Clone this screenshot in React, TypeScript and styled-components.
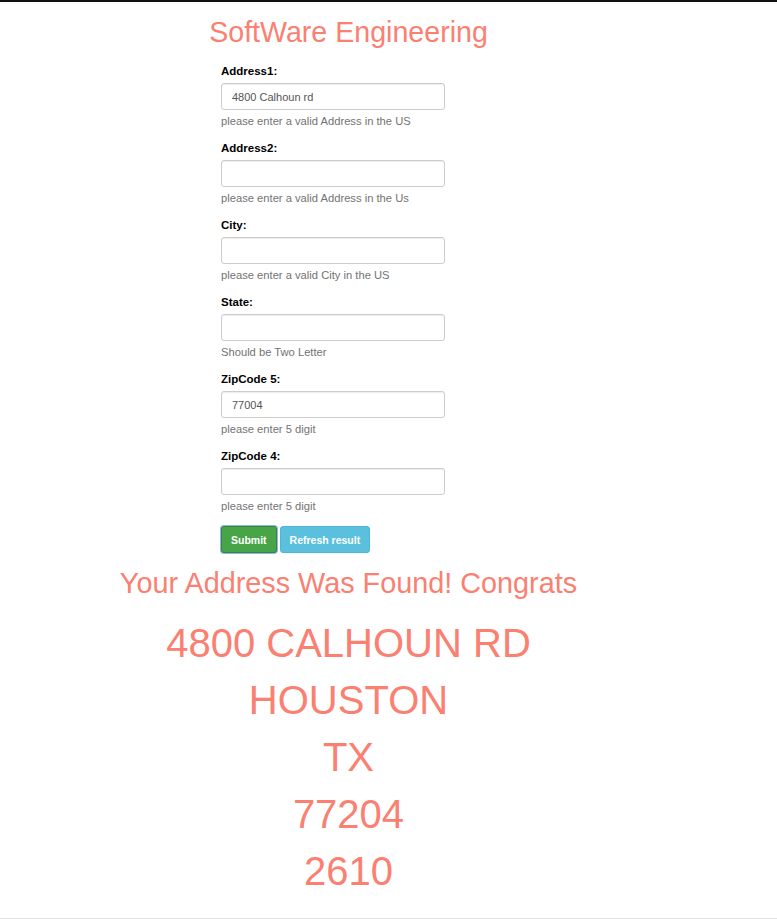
import React from 'react';
import styled, { createGlobalStyle } from 'styled-components';

const GlobalStyle = createGlobalStyle`
  html, body {
    margin: 0;
    padding: 0;
    background: #fff;
  }
  body {
    font-family: "Liberation Sans", Arial, sans-serif;
    color: #333;
  }
  * {
    box-sizing: border-box;
  }
`;

const salmon = '#fa8072';

const Page = styled.div`
  border-top: 2px solid #111;
  min-height: 921px;
  display: flex;
  flex-direction: column;
`;

const Column = styled.main`
  width: 697px;
  display: flex;
  flex-direction: column;
`;

const Title = styled.h1`
  margin: 0;
  padding-top: 13px;
  font-size: 28.6px;
  line-height: 34px;
  font-weight: normal;
  color: ${salmon};
  text-align: center;
`;

const Form = styled.form`
  margin: 14px 0 0 221px;
  width: 224px;
  display: flex;
  flex-direction: column;
`;

const Group = styled.div`
  display: flex;
  flex-direction: column;
  margin-bottom: 11px;
`;

const Label = styled.label`
  font-size: 11.5px;
  font-weight: bold;
  line-height: 16px;
  color: #000;
  margin-bottom: 4px;
`;

const Input = styled.input`
  width: 224px;
  height: 27px;
  padding: 0 10px;
  border: 1px solid #ccc;
  border-radius: 3px;
  font-family: inherit;
  font-size: 11px;
  color: #555;
  outline: none;
  box-shadow: inset 0 1px 1px rgba(0, 0, 0, 0.075);
`;

const Help = styled.span`
  margin-top: 3px;
  font-size: 11.2px;
  line-height: 16px;
  color: #737373;
`;

const Buttons = styled.div`
  display: flex;
  gap: 3px;
  margin-top: 1px;
`;

const Button = styled.button<{ $variant: 'success' | 'info' }>`
  height: 27px;
  padding: 0 9px;
  border-radius: 3px;
  font-family: inherit;
  font-size: 10.5px;
  font-weight: bold;
  color: #fff;
  cursor: pointer;
  background: ${(p) => (p.$variant === 'success' ? '#47a447' : '#5bc0de')};
  border: 1px solid ${(p) => (p.$variant === 'success' ? '#398439' : '#46b8da')};
  box-shadow: ${(p) => (p.$variant === 'success' ? '0 0 0 1px #8fb4f0' : 'none')};
`;

const Found = styled.h2`
  margin: 14px 0 0;
  font-size: 28.8px;
  line-height: 32px;
  font-weight: normal;
  color: ${salmon};
  text-align: center;
`;

const Result = styled.div`
  margin-top: 16px;
  display: flex;
  flex-direction: column;
  align-items: center;
`;

const ResultLine = styled.div`
  font-size: 40px;
  line-height: 57px;
  color: ${salmon};
`;

const Footer = styled.footer`
  margin-top: 18px;
  border-top: 1px solid #e6e6e6;
  flex: 1;
`;

const fields = [
  { label: 'Address1:', value: '4800 Calhoun rd', help: 'please enter a valid Address in the US' },
  { label: 'Address2:', value: '', help: 'please enter a valid Address in the Us' },
  { label: 'City:', value: '', help: 'please enter a valid City in the US' },
  { label: 'State:', value: '', help: 'Should be Two Letter' },
  { label: 'ZipCode 5:', value: '77004', help: 'please enter 5 digit' },
  { label: 'ZipCode 4:', value: '', help: 'please enter 5 digit' },
];

const result = ['4800 CALHOUN RD', 'HOUSTON', 'TX', '77204', '2610'];

export default function App() {
  return (
    <>
      <GlobalStyle />
      <Page>
        <Column>
          <Title>SoftWare Engineering</Title>
          <Form onSubmit={(e) => e.preventDefault()}>
            {fields.map((f) => (
              <Group key={f.label}>
                <Label>{f.label}</Label>
                <Input defaultValue={f.value} />
                <Help>{f.help}</Help>
              </Group>
            ))}
            <Buttons>
              <Button $variant="success" type="submit">Submit</Button>
              <Button $variant="info" type="button">Refresh result</Button>
            </Buttons>
          </Form>
          <Found>Your Address Was Found! Congrats</Found>
          <Result>
            {result.map((line) => (
              <ResultLine key={line}>{line}</ResultLine>
            ))}
          </Result>
        </Column>
        <Footer />
      </Page>
    </>
  );
}
